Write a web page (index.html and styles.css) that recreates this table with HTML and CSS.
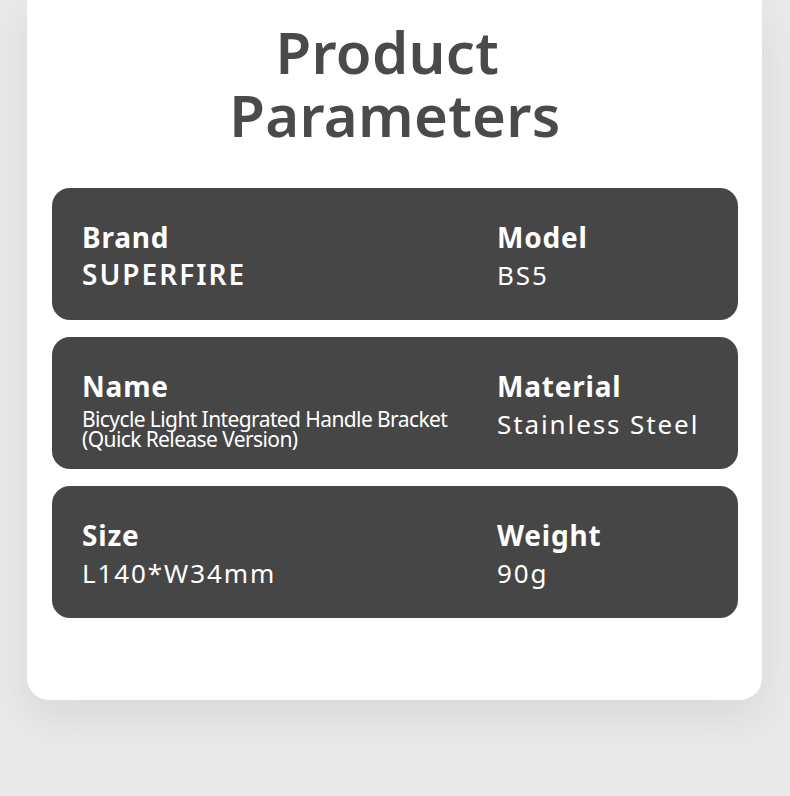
FILE: index.html
```html
<!DOCTYPE html>
<html lang="en">
<head>
<meta charset="utf-8">
<title>Product Parameters</title>
<link rel="stylesheet" href="styles.css">
</head>
<body>
<div class="page">
  <section class="card">
    <h1 class="title">Product&nbsp;<br>Parameters</h1>
    <div class="rows">
      <div class="row">
        <div class="cell">
          <div class="label">Brand</div>
          <div class="value value-brand">SUPERFIRE</div>
        </div>
        <div class="cell">
          <div class="label">Model</div>
          <div class="value">BS5</div>
        </div>
      </div>
      <div class="row">
        <div class="cell">
          <div class="label">Name</div>
          <div class="value value-small">Bicycle Light Integrated Handle Bracket<br>(Quick Release Version)</div>
        </div>
        <div class="cell">
          <div class="label">Material</div>
          <div class="value">Stainless Steel</div>
        </div>
      </div>
      <div class="row">
        <div class="cell">
          <div class="label">Size</div>
          <div class="value">L140*W34mm</div>
        </div>
        <div class="cell">
          <div class="label">Weight</div>
          <div class="value">90g</div>
        </div>
      </div>
    </div>
  </section>
</div>
</body>
</html>
```
FILE: styles.css
```css
html, body {
  margin: 0;
  padding: 0;
  background: #e9e9e9;
  height: 796px;
  overflow: hidden;
}

.page {
  padding: 0 28px 0 27px;
  font-family: "Noto Sans", "Open Sans", sans-serif;
}

.card {
  background: #ffffff;
  border-radius: 0 0 22px 22px;
  padding: 20px 24px 82px 25px;
  box-shadow: 0 18px 40px rgba(0, 0, 0, 0.07);
}

.title {
  margin: 0;
  text-align: center;
  font-size: 58px;
  font-weight: 600;
  line-height: 63px;
  color: #4a4a4a;
  letter-spacing: 0.3px;
}

.rows {
  margin-top: 42px;
  display: flex;
  flex-direction: column;
  gap: 17px;
}

.row {
  background: #464646;
  border-radius: 18px;
  height: 132px;
  box-sizing: border-box;
  padding: 31px 30px 0;
  display: grid;
  grid-template-columns: 415px 1fr;
  align-items: start;
  color: #ffffff;
}

.cell {
  display: flex;
  flex-direction: column;
}

.label {
  font-size: 28px;
  font-weight: 700;
  line-height: 36px;
  letter-spacing: 0.8px;
}

.value {
  font-size: 26px;
  font-weight: 400;
  line-height: 34px;
  letter-spacing: 1.9px;
  margin-top: 3px;
}

.value-brand {
  font-size: 28px;
  font-weight: 600;
  letter-spacing: 2px;
  margin-top: 2px;
}

.value-small {
  font-size: 21px;
  line-height: 20px;
  letter-spacing: -0.6px;
  margin-top: 5px;
}
```
